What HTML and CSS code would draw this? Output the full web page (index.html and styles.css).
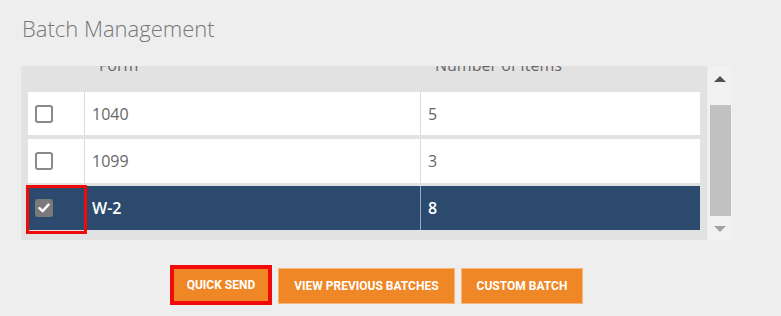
FILE: index.html
```html
<!DOCTYPE html>
<html lang="en">
<head>
    <meta charset="UTF-8">
    <title>Batch Management</title>
    <link rel="stylesheet" href="styles.css">
</head>
<body>
<div class="page">
    <h2 class="title">Batch Management</h2>
    <div class="grid-wrap">
        <div class="table-box">
            <div class="row head">
                <div class="cell check"></div>
                <div class="cell"><span class="head-text">Form</span></div>
                <div class="cell"><span class="head-text">Number of Items</span></div>
            </div>
            <div class="row first">
                <div class="cell check"><span class="box"></span></div>
                <div class="cell">1040</div>
                <div class="cell">5</div>
            </div>
            <div class="row second">
                <div class="cell check"><span class="box"></span></div>
                <div class="cell">1099</div>
                <div class="cell">3</div>
            </div>
            <div class="row selected">
                <div class="cell check">
                    <span class="box checked">
                        <svg width="12" height="10" viewBox="0 0 12 10"><path d="M1.5 5.2 L4.6 8.2 L10.5 1.6" fill="none" stroke="#fff" stroke-width="2.4" stroke-linecap="round" stroke-linejoin="round"/></svg>
                    </span>
                    <span class="highlight"></span>
                </div>
                <div class="cell">W-2</div>
                <div class="cell">8</div>
            </div>
        </div>
        <div class="scrollbar">
            <span class="arrow up"></span>
            <span class="thumb"></span>
            <span class="arrow down"></span>
        </div>
    </div>
    <div class="actions">
        <button class="btn focused">Quick Send</button>
        <button class="btn">View Previous Batches</button>
        <button class="btn">Custom Batch</button>
    </div>
</div>
</body>
</html>
```
FILE: styles.css
```css
body {
    margin: 0;
    background-color: #eeeeee;
    font-family: 'Open Sans', sans-serif;
    color: #666;
}

.page {
    padding: 13px 0 0 21px;
    width: 711px;
}

.title {
    margin: 0 0 0 1px;
    font-family: 'Open Sans', sans-serif;
    font-weight: 300;
    font-size: 22px;
    line-height: 30px;
    color: #777;
}

.grid-wrap {
    display: flex;
    margin-top: 23px;
    height: 174px;
}

.table-box {
    width: 672px;
    padding: 0 7px 10px;
    background-color: #e2e2e2;
    overflow: hidden;
}

.row {
    display: grid;
    grid-template-columns: 56px 336px 1fr;
    height: 44px;
    margin-top: 3px;
    background-color: #fff;
    font-size: 16px;
}

.row.first {
    height: 43px;
    margin-top: 0;
}

.row.second {
    margin-top: 4px;
}

.row .cell {
    display: flex;
    align-items: center;
    padding-left: 7px;
    border-left: 1px solid #dcdcdc;
}

.row .cell.check {
    border-left: none;
    padding-left: 7px;
    position: relative;
}

.row.head {
    height: 26px;
    margin-top: 0;
    background-color: #e2e2e2;
}

.row.head .cell {
    border-left: none;
    align-items: flex-start;
    padding-left: 15px;
    overflow: hidden;
}

.head-text {
    margin-top: -12px;
    font-size: 16px;
}

.box {
    width: 14px;
    height: 14px;
    border: 2px solid #8a8a8a;
    border-radius: 3px;
    background: #fff;
    display: flex;
    align-items: center;
    justify-content: center;
}

.box.checked {
    background: #7a7a7a;
    border-color: #7a7a7a;
}

.row.selected {
    background-color: #2b4a6e;
    color: #fff;
    font-weight: 600;
}

.row.selected .cell {
    border-left-color: #9aabc0;
}

.row.selected .cell.check {
    border-left: none;
}

.highlight {
    position: absolute;
    left: -2px;
    top: -1px;
    width: 55px;
    height: 43px;
    border: 3px solid #f00a0a;
}

.scrollbar {
    width: 24px;
    margin-left: 1px;
    background-color: #f1f1f1;
    display: flex;
    flex-direction: column;
    align-items: center;
}

.arrow {
    width: 0;
    height: 0;
    border-left: 6px solid transparent;
    border-right: 6px solid transparent;
}

.arrow.up {
    margin-top: 10px;
    border-bottom: 6px solid #505050;
}

.thumb {
    width: 21px;
    height: 111px;
    margin-top: 23px;
    background-color: #c1c1c1;
}

.arrow.down {
    margin-top: 10px;
    border-top: 6px solid #a3a3a3;
}

.actions {
    display: flex;
    justify-content: center;
    gap: 6px;
    margin-top: 28px;
}

.btn {
    height: 36px;
    padding: 0 15px;
    background-color: #ef8727;
    border: 1px solid #f6b57a;
    color: #fff;
    font-family: 'Roboto', sans-serif;
    font-weight: 700;
    font-size: 12px;
    text-transform: uppercase;
    cursor: pointer;
}

.btn.focused {
    height: 40px;
    margin-top: -3px;
    padding: 0 13px;
    border: 4px solid #f00a0a;
}
```
